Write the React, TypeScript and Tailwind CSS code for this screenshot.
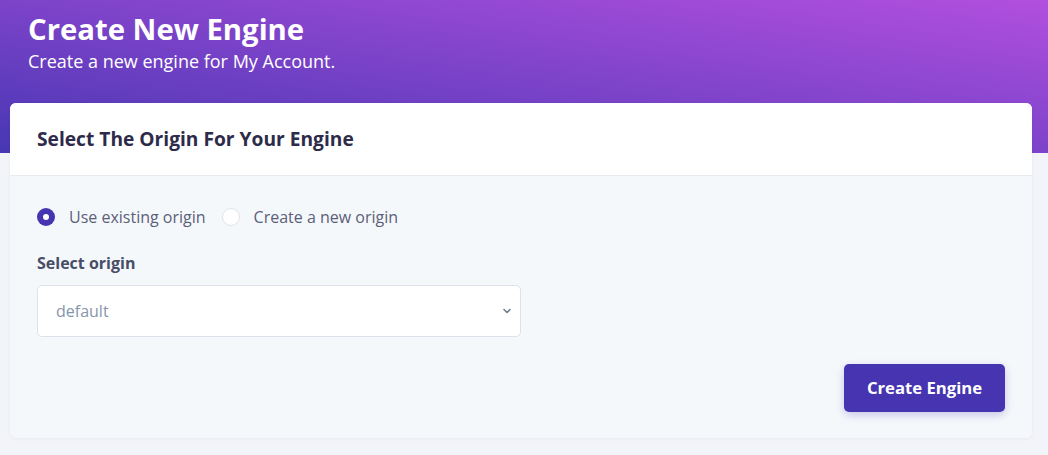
import React from "react";

export default function App() {
  return (
    <div className="min-h-[455px] bg-[#f3f4f9] font-['Open_Sans',sans-serif]">
      <div className="h-[153px] bg-[linear-gradient(to_top_right,#4737b3,#b24fdf)] px-[28px] pt-[10px]">
        <h1 className="text-[29.3px] font-bold leading-[38px] text-white">Create New Engine</h1>
        <p className="text-[18px] leading-[26px] text-white">Create a new engine for My Account.</p>
      </div>
      <div className="-mt-[50px] px-[10px] pr-[16px]">
        <div className="overflow-hidden rounded-[6px] bg-[#f5f8fb] shadow-[0_1px_3px_rgba(60,60,100,0.06)]">
          <div className="flex h-[73px] items-center border-b border-[#e8ebf0] bg-white px-[27px]">
            <h2 className="text-[19.2px] font-bold text-[#2e2b4a]">Select The Origin For Your Engine</h2>
          </div>
          <div className="px-[27px] pb-[26px] pt-[29px]">
            <div className="flex h-[24px] items-center text-[16px] text-[#5b6079]">
              <span className="flex h-[18px] w-[18px] items-center justify-center rounded-full bg-[#4634b0]">
                <span className="h-[6px] w-[6px] rounded-full bg-white" />
              </span>
              <span className="ml-[14px]">Use existing origin</span>
              <span className="ml-[16px] h-[18px] w-[18px] rounded-full border border-[#e0e3ea] bg-white" />
              <span className="ml-[14px]">Create a new origin</span>
            </div>
            <div className="mt-[22px] text-[16px] font-bold leading-[24px] text-[#474d66]">Select origin</div>
            <div className="mt-[10px] flex h-[52px] w-[484px] items-center justify-between rounded-[5px] border border-[#dde2ea] bg-white pl-[18px] pr-[8px]">
              <span className="text-[16px] text-[#8696aa]">default</span>
              <svg width="10" height="10" viewBox="0 0 10 10" fill="none">
                <path d="M2 3.5 L5 6.5 L8 3.5" stroke="#6e7c91" strokeWidth="1.6" strokeLinecap="round" strokeLinejoin="round" />
              </svg>
            </div>
            <div className="mt-[27px] flex justify-end">
              <button className="h-[48px] w-[161px] rounded-[5px] bg-[#4634b0] text-[16.7px] font-bold text-white shadow-[0_3px_8px_rgba(70,52,176,0.25)]">
                Create Engine
              </button>
            </div>
          </div>
        </div>
      </div>
    </div>
  );
}
